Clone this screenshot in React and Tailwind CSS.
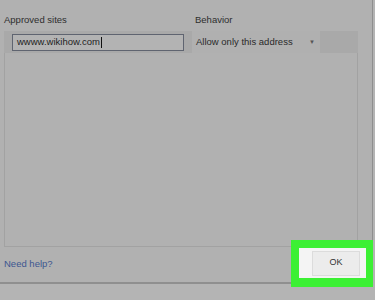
export default function App() {
    return (
        <div className="relative w-[375px] h-[300px] bg-[#b4b4b4] overflow-hidden" style={{ fontFamily: '"Liberation Sans", Arial, sans-serif' }}>
            <div className="w-[373px] h-[284px] bg-[#b1b1b1] border-r border-b-2 border-[#8f8f8f] flex flex-col">
                <div className="flex pt-[14px] text-[9.5px] text-[#2e2e2e] leading-[12px]">
                    <div className="pl-[4px] w-[195px]">Approved sites</div>
                    <div>Behavior</div>
                </div>

                <div className="ml-[4px] mt-[5px] w-[354px]">
                    <div className="h-[22px] bg-[#a9a9a9] flex items-center">
                        <div className="ml-[8px] w-[172px] h-[17px] border border-[#5f6470] bg-[#b3b3b3] flex items-center pl-[4px] text-[9.5px] text-[#1e1e1e]">
                            wwww.wikihow.com<span className="inline-block w-px h-[11px] bg-[#111] ml-px"></span>
                        </div>
                        <div className="ml-[8px] w-[128px] h-[22px] bg-[#b0b0b0] flex items-center justify-between pl-[4px] pr-[5px] text-[9.5px] text-[#2a2a2a]">
                            <span>Allow only this address</span>
                            <span className="text-[6px] text-[#555]">▼</span>
                        </div>
                    </div>
                    <div className="h-[194px] border-l border-r border-b border-[#a2a2a2]"></div>
                </div>

                <div className="pl-[4px] pt-[11px] text-[9.5px] leading-[12px] text-[#3c5690]">Need help?</div>
            </div>

            {/* green highlight over the OK button */}
            <div className="absolute left-[291px] top-[240px] w-[82px] h-[47px] bg-[#3cf034] p-[8px]">
                <div className="w-[67px] h-[30px] bg-[#f4f4f4] flex items-center justify-end pr-[6px]">
                    <div className="w-[48px] h-[25px] bg-[#ececec] border border-[#dcdcdc] flex items-center justify-center text-[9px] text-[#333]">OK</div>
                </div>
            </div>
        </div>
    )
}
